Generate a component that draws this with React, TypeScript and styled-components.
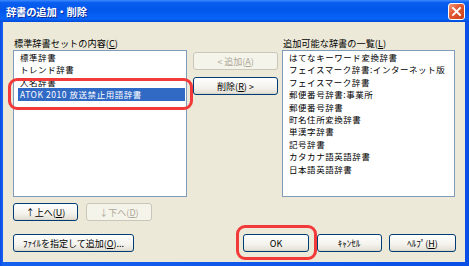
import React from 'react';
import styled, { createGlobalStyle, css } from 'styled-components';

const Global = createGlobalStyle`
  html, body { margin: 0; padding: 0; background: #ffffff; }
  body { font-family: "Noto Sans CJK JP", "Noto Sans", sans-serif; }
  * { box-sizing: border-box; }
`;

const Window = styled.div`
  position: relative;
  width: 469px;
  height: 266px;
  display: flex;
  flex-direction: column;
  overflow: hidden;
`;

const TitleBar = styled.div`
  height: 22px;
  flex: none;
  display: flex;
  align-items: center;
  justify-content: space-between;
  padding: 0 4px 0 6px;
  background: linear-gradient(
    to bottom,
    #3d8bff 0%,
    #0a5ef0 12%,
    #0256ea 45%,
    #0864fa 85%,
    #0049d6 100%
  );
`;

const Title = styled.span`
  color: #ffffff;
  font-weight: 700;
  font-size: 10.3px;
  letter-spacing: -0.2px;
  text-shadow: 1px 1px 0 #0a2a9a;
`;

const CloseButton = styled.div`
  width: 17px;
  height: 17px;
  border: 1px solid #ffffff;
  border-radius: 3px;
  background: linear-gradient(135deg, #f29a7c 0%, #e35b33 40%, #c93f1b 100%);
  display: flex;
  align-items: center;
  justify-content: center;
`;

const Frame = styled.div`
  flex: 1;
  display: flex;
  padding: 0 4px 4px 3px;
  background: linear-gradient(to right, #0a4fe6 0px, #1660ee 3px, #0a4fe6 100%);
`;

const Body = styled.div`
  flex: 1;
  background: #ece9d8;
  padding: 15px 9px 0 10px;
  display: flex;
  flex-direction: column;
`;

const MainRow = styled.div`
  display: flex;
  align-items: flex-start;
`;

const Pane = styled.div<{ $w: number; $ml?: number }>`
  width: ${(p) => p.$w}px;
  margin-left: ${(p) => p.$ml ?? 0}px;
  display: flex;
  flex-direction: column;
`;

const MidPane = styled.div`
  width: 85px;
  margin-left: 6px;
  padding-top: 15px;
  display: flex;
  flex-direction: column;
  gap: 7px;
`;

const Label = styled.div`
  height: 13px;
  font-size: 9.2px;
  line-height: 13px;
  color: #000000;
  padding-left: 1px;
  white-space: nowrap;
`;

const ListBox = styled.div`
  height: 147px;
  background: #ffffff;
  border: 1px solid #7f9db9;
  padding: 0 1px 0 4px;
  overflow: hidden;
`;

const Item = styled.div<{ $selected?: boolean }>`
  height: 12.4px;
  line-height: 12.4px;
  font-size: 8.5px;
  letter-spacing: 0.55px;
  padding-left: 2px;
  white-space: nowrap;
  color: ${(p) => (p.$selected ? '#ffffff' : '#000000')};
  background: ${(p) => (p.$selected ? '#316ac5' : 'transparent')};
`;

const Button = styled.div<{ $w: number; $disabled?: boolean }>`
  width: ${(p) => p.$w}px;
  height: 18px;
  flex: none;
  border-radius: 3px;
  display: flex;
  align-items: center;
  justify-content: center;
  font-size: 9px;
  white-space: nowrap;
  ${(p) =>
    p.$disabled
      ? css`
          border: 1px solid #c9c7ba;
          background: #f5f4ea;
          color: #aca899;
        `
      : css`
          border: 1px solid #003c74;
          background: linear-gradient(to bottom, #ffffff 0%, #f3f2ec 60%, #e6e3d8 90%, #d6d0c5 100%);
          color: #000000;
        `}
`;

const Key = styled.span`
  text-decoration: underline;
  text-underline-offset: 1px;
`;

const ButtonRow = styled.div<{ $mt: number; $gap: number }>`
  display: flex;
  margin-top: ${(p) => p.$mt}px;
  gap: ${(p) => p.$gap}px;
`;

const Footer = styled.div`
  display: flex;
  align-items: flex-start;
  margin-top: 13px;
`;

const DialogButtons = styled.div`
  margin-left: auto;
  display: flex;
  gap: 7.5px;
`;

const Ring = styled.div<{ $x: number; $y: number; $w: number; $h: number }>`
  position: absolute;
  left: ${(p) => p.$x}px;
  top: ${(p) => p.$y}px;
  width: ${(p) => p.$w}px;
  height: ${(p) => p.$h}px;
  border: 3.5px solid #f23a3a;
  border-radius: 9px;
  pointer-events: none;
`;

const leftItems = ['標準辞書', 'トレンド辞書', '人名辞書'];
const rightItems = [
  'はてなキーワード変換辞書',
  'フェイスマーク辞書:インターネット版',
  'フェイスマーク辞書',
  '郵便番号辞書:事業所',
  '郵便番号辞書',
  '町名住所変換辞書',
  '単漢字辞書',
  '記号辞書',
  'カタカナ語英語辞書',
  '日本語英語辞書',
];

export default function App() {
  return (
    <>
      <Global />
      <Window>
        <TitleBar>
          <Title>辞書の追加・削除</Title>
          <CloseButton>
            <svg width="11" height="11" viewBox="0 0 11 11">
              <path d="M2 2 L9 9 M9 2 L2 9" stroke="#ffffff" strokeWidth="1.9" strokeLinecap="square" />
            </svg>
          </CloseButton>
        </TitleBar>
        <Frame>
          <Body>
            <MainRow>
              <Pane $w={174}>
                <Label>
                  標準辞書セットの内容(<Key>C</Key>)
                </Label>
                <ListBox>
                  {leftItems.map((t) => (
                    <Item key={t}>{t}</Item>
                  ))}
                  <Item $selected>ATOK 2010 放送禁止用語辞書</Item>
                </ListBox>
                <ButtonRow $mt={6} $gap={8}>
                  <Button $w={65}>
                    ↑上へ(<Key>U</Key>)
                  </Button>
                  <Button $w={66} $disabled>
                    ↓下へ(<Key>D</Key>)
                  </Button>
                </ButtonRow>
              </Pane>
              <MidPane>
                <Button $w={85} $disabled>
                  &lt; 追加(<Key>A</Key>)
                </Button>
                <Button $w={85}>
                  削除(<Key>R</Key>) &gt;
                </Button>
              </MidPane>
              <Pane $w={173} $ml={4}>
                <Label>
                  追加可能な辞書の一覧(<Key>L</Key>)
                </Label>
                <ListBox>
                  {rightItems.map((t) => (
                    <Item key={t}>{t}</Item>
                  ))}
                </ListBox>
              </Pane>
            </MainRow>
            <Footer>
              <Button $w={121}>
                ﾌｧｲﾙを指定して追加(<Key>O</Key>)...
              </Button>
              <DialogButtons>
                <Button $w={66}>OK</Button>
                <Button $w={65}>ｷｬﾝｾﾙ</Button>
                <Button $w={67}>
                  ﾍﾙﾌﾟ(<Key>H</Key>)
                </Button>
              </DialogButtons>
            </Footer>
          </Body>
        </Frame>
        <Ring $x={8} $y={78} $w={185} $h={32} />
        <Ring $x={236} $y={225} $w={81} $h={35} />
      </Window>
    </>
  );
}
